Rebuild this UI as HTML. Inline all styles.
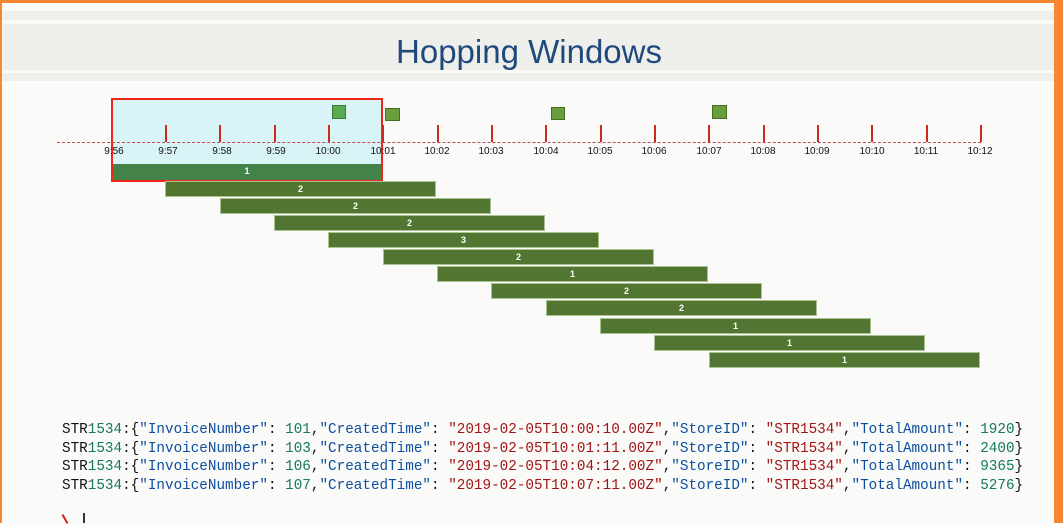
<!DOCTYPE html>
<html><head><meta charset="utf-8"><style>
body{margin:0;width:1063px;height:523px;overflow:hidden;background:#fafaf8;position:relative;font-family:"Liberation Sans",sans-serif}
.a{position:absolute}
.bar{position:absolute;height:16px;width:271px;background:#527631;border:1px solid #a8c292;box-sizing:border-box;color:#fff;font-size:9px;font-weight:bold;text-align:center;line-height:15px}
.tk{position:absolute;top:125px;width:2px;height:17px;background:#cc2a1e}
.lb{position:absolute;top:146px;font-size:10px;color:#111;width:40px;margin-left:-20px;text-align:center}
.code{position:absolute;left:62px;font-family:"Liberation Mono",monospace;font-size:14.3px;color:#111;white-space:pre}
.g{color:#16795a}.b{color:#0d4fa0}.r{color:#a31515}
</style></head><body>
<div class="a" style="left:0;top:0;width:1063px;height:3px;background:#f7862e"></div>
<div class="a" style="left:0;top:0;width:2px;height:523px;background:#f7862e"></div>
<div class="a" style="left:1054px;top:0;width:9px;height:523px;background:#f7862e"></div>
<div class="a" style="left:3px;top:11px;width:1051px;height:9px;background:#eeefeb"></div>
<div class="a" style="left:3px;top:24px;width:1051px;height:46px;background:#eeefeb"></div>
<div class="a" style="left:3px;top:73px;width:1051px;height:8px;background:#eeefeb"></div>
<div class="a" style="left:0;top:33px;width:1058px;text-align:center;font-size:33px;color:#1f497d">Hopping Windows</div>
<div class="a" style="left:111px;top:98px;width:272px;height:84px;background:#d8f4f6;border:2px solid #f0261a;box-sizing:border-box"></div>
<div class="a" style="left:57px;top:142px;width:924px;border-top:1.5px dashed #c94a44"></div>
<div class="tk" style="left:165px"></div><div class="tk" style="left:219px"></div><div class="tk" style="left:274px"></div><div class="tk" style="left:328px"></div><div class="tk" style="left:382px"></div><div class="tk" style="left:437px"></div><div class="tk" style="left:491px"></div><div class="tk" style="left:545px"></div><div class="tk" style="left:600px"></div><div class="tk" style="left:654px"></div><div class="tk" style="left:708px"></div><div class="tk" style="left:763px"></div><div class="tk" style="left:817px"></div><div class="tk" style="left:871px"></div><div class="tk" style="left:926px"></div><div class="tk" style="left:980px"></div>
<div class="lb" style="left:114px">9:56</div><div class="lb" style="left:168px">9:57</div><div class="lb" style="left:222px">9:58</div><div class="lb" style="left:276px">9:59</div><div class="lb" style="left:328px">10:00</div><div class="lb" style="left:383px">10:01</div><div class="lb" style="left:437px">10:02</div><div class="lb" style="left:491px">10:03</div><div class="lb" style="left:546px">10:04</div><div class="lb" style="left:600px">10:05</div><div class="lb" style="left:654px">10:06</div><div class="lb" style="left:709px">10:07</div><div class="lb" style="left:763px">10:08</div><div class="lb" style="left:817px">10:09</div><div class="lb" style="left:872px">10:10</div><div class="lb" style="left:926px">10:11</div><div class="lb" style="left:980px">10:12</div>
<div class="a" style="left:332px;top:105px;width:14px;height:14px;background:#5aa852;border:1px solid #3b7a35;box-sizing:border-box"></div>
<div class="a" style="left:385px;top:108px;width:15px;height:13px;background:#6a9e3c;border:1px solid #456f26;box-sizing:border-box"></div>
<div class="a" style="left:551px;top:107px;width:14px;height:13px;background:#6a9e3c;border:1px solid #456f26;box-sizing:border-box"></div>
<div class="a" style="left:712px;top:105px;width:15px;height:14px;background:#6a9e3c;border:1px solid #456f26;box-sizing:border-box"></div>
<div class="bar" style="left:113px;top:164px;width:268px;background:#43834a;border:none">1</div>
<div class="bar" style="left:165px;top:181px">2</div>
<div class="bar" style="left:220px;top:198px">2</div>
<div class="bar" style="left:274px;top:215px">2</div>
<div class="bar" style="left:328px;top:232px">3</div>
<div class="bar" style="left:383px;top:249px">2</div>
<div class="bar" style="left:437px;top:266px">1</div>
<div class="bar" style="left:491px;top:283px">2</div>
<div class="bar" style="left:546px;top:300px">2</div>
<div class="bar" style="left:600px;top:318px">1</div>
<div class="bar" style="left:654px;top:335px">1</div>
<div class="bar" style="left:709px;top:352px">1</div>
<div class="code" style="top:422px">STR<span class="g">1534</span>:{<span class="b">"InvoiceNumber"</span>: <span class="g">101</span>,<span class="b">"CreatedTime"</span>: <span class="r">"2019-02-05T10:00:10.00Z"</span>,<span class="b">"StoreID"</span>: <span class="r">"STR1534"</span>,<span class="b">"TotalAmount"</span>: <span class="g">1920</span>}</div>
<div class="code" style="top:441px">STR<span class="g">1534</span>:{<span class="b">"InvoiceNumber"</span>: <span class="g">103</span>,<span class="b">"CreatedTime"</span>: <span class="r">"2019-02-05T10:01:11.00Z"</span>,<span class="b">"StoreID"</span>: <span class="r">"STR1534"</span>,<span class="b">"TotalAmount"</span>: <span class="g">2400</span>}</div>
<div class="code" style="top:459px">STR<span class="g">1534</span>:{<span class="b">"InvoiceNumber"</span>: <span class="g">106</span>,<span class="b">"CreatedTime"</span>: <span class="r">"2019-02-05T10:04:12.00Z"</span>,<span class="b">"StoreID"</span>: <span class="r">"STR1534"</span>,<span class="b">"TotalAmount"</span>: <span class="g">9365</span>}</div>
<div class="code" style="top:478px">STR<span class="g">1534</span>:{<span class="b">"InvoiceNumber"</span>: <span class="g">107</span>,<span class="b">"CreatedTime"</span>: <span class="r">"2019-02-05T10:07:11.00Z"</span>,<span class="b">"StoreID"</span>: <span class="r">"STR1534"</span>,<span class="b">"TotalAmount"</span>: <span class="g">5276</span>}</div>
<div class="a" style="left:64px;top:514px;width:2px;height:10px;background:#d0201a;transform:rotate(-30deg)"></div>
<div class="a" style="left:83px;top:513px;width:2px;height:10px;background:#333"></div>
</body></html>
